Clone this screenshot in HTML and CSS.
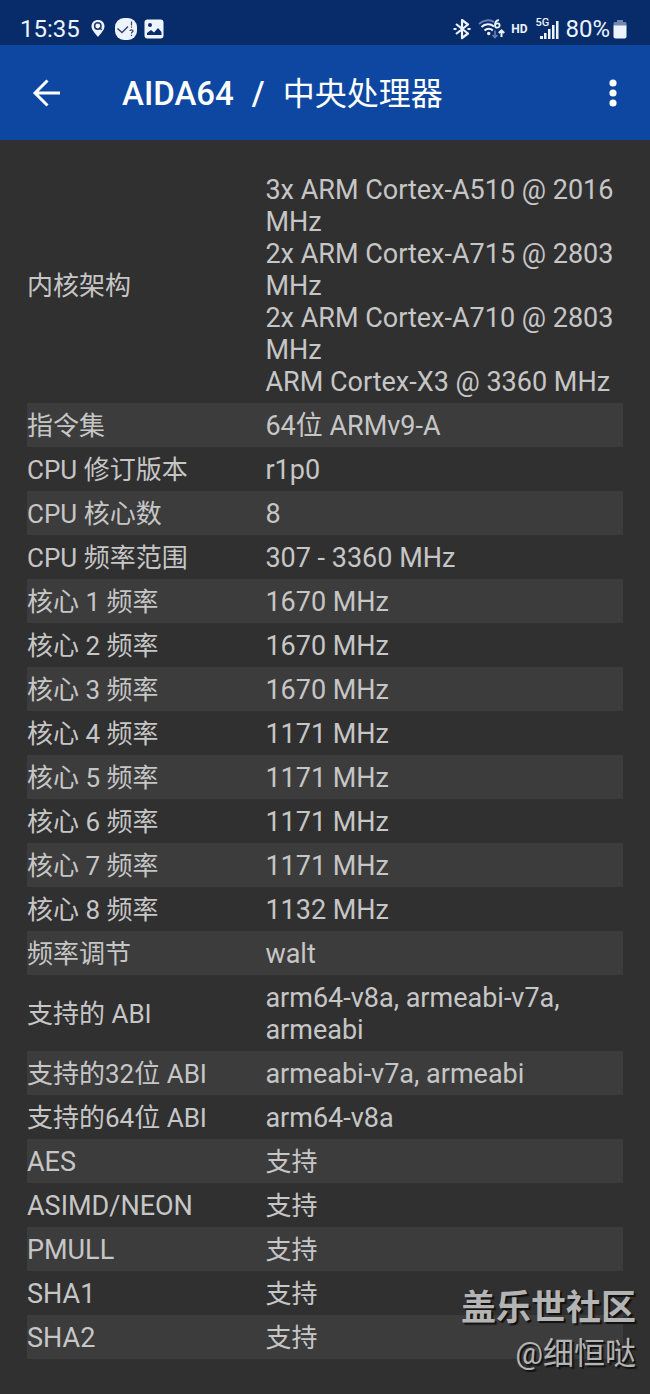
FILE: index.html
```html
<!DOCTYPE html>
<html lang="zh-CN">
<head>
  <meta charset="UTF-8">
  <meta name="viewport" content="width=device-width, initial-scale=1.0">
  <title>AIDA64 / 中央处理器</title>
  <link rel="stylesheet" href="styles.css">
</head>
<body>

  <div class="status-bar">
    <div class="status-left">
      <span class="clock">15:35</span>
      <svg class="pin" width="14" height="20" viewBox="0 0 14 20">
        <path d="M7 1C3.200 1 .5 3.600 .5 7.200c0 4 4 7.300 6.500 10.800 2.500-3.500 6.500-6.800 6.500-10.800C13.500 3.600 10.800 1 7 1z" fill="#eef4ff"/>
        <circle cx="6.800" cy="7" r="3.200" fill="none" stroke="#17366f" stroke-width="1.500"/>
        <path d="M8.500 8.500l2.200 2.200" stroke="#17366f" stroke-width="1.500"/>
      </svg>
      <svg class="check" width="24" height="24" viewBox="0 0 24 24">
        <rect x="1" y="1" width="22" height="22" rx="9" fill="#eef4ff"/>
        <path d="M3.500 11.500l4.500 4 6-6" fill="none" stroke="#34415c" stroke-width="1.400"/>
        <path d="M17.500 4.500v4M17.500 9.500v1.300M16 14c0-1.500 3-1.500 3 0 0 1.200-1.500 1-1.500 2.500M17.500 17.700V19" fill="none" stroke="#34415c" stroke-width="1.200"/>
      </svg>
      <svg width="20" height="20" viewBox="0 0 20 20">
        <rect x="0.500" y="0.500" width="19" height="19" rx="3" fill="#eef4ff"/>
        <circle cx="6" cy="6" r="2" fill="#0a2c6b"/>
        <path d="M3 16v-2l4-3 3 2.500 4-4.500 3.500 4V16z" fill="#0a2c6b"/>
      </svg>
    </div>
    <div class="status-right">
      <svg class="bluetooth" width="20" height="22" viewBox="0 0 20 22" fill="none" stroke="#eef4ff" stroke-width="2.200" stroke-linejoin="round">
        <path d="M4 6l12 9.500-6 4.500V2l6 4.500L4 16"/>
        <path d="M1.500 11h3M15.500 11h3"/>
      </svg>
      <svg class="wifi" width="28" height="22" viewBox="0 0 28 22" fill="none">
        <path d="M1 6C5 2.200 12 1 16 4" stroke="#6680b0" stroke-width="2"/>
        <path d="M3.500 9c3.500-3.500 9-3.500 12.500-.5M6.500 12.500c2.400-2.400 6-2.400 8.300 0" stroke="#eef4ff" stroke-width="2"/>
        <circle cx="10.700" cy="15.500" r="1.700" fill="#eef4ff"/>
        <path d="M17 12.500v7M14.500 17l2.500 2.500 2.500-2.500" stroke="#6680b0" stroke-width="1.600"/>
        <path d="M23.500 19v-6.500M20.800 15l2.700-2.700 2.700 2.700" stroke="#eef4ff" stroke-width="2"/>
        <path d="M20.800 2C18 2.500 17 5 17 7.200c0 3.300 4.600 3.300 4.600.3 0-2.700-3.700-2.800-4.500-.2" stroke="#eef4ff" stroke-width="1.800"/>
      </svg>
      <span class="hd">HD</span>
      <div class="signal">
        <svg width="24" height="22" viewBox="0 0 24 22" fill="#eef4ff">
          <path d="M5 18h3v3H5zM9 15h2.500v6H9zM13 11h2.500v10H13zM17 7h2.500v14H17zM21 3h2.500v18H21z"/>
        </svg>
        <span class="network">5G</span>
      </div>
      <span class="battery-level">80%</span>
      <svg class="battery" width="14" height="20" viewBox="0 0 14 20">
        <path d="M4 1h6v2h2q1.500 0 1.500 1.500V7H.5V4.500Q.5 3 2 3h2z" fill="#7388b0"/>
        <path d="M.5 6.500h13v11q0 2-2 2h-9q-2 0-2-2z" fill="#eef4ff"/>
      </svg>
    </div>
  </div>

  <header class="app-bar">
    <button class="back" aria-label="返回">
      <svg width="32" height="32" viewBox="0 0 32 32" fill="none" stroke="#fff" stroke-width="3">
        <path d="M30 16H5M17.500 3.500L5 16l12.500 12.500"/>
      </svg>
    </button>
    <h1><b>AIDA64</b><b>/</b><span>中央处理器</span></h1>
    <button class="more" aria-label="更多">
      <svg width="8" height="28" viewBox="0 0 8 28" fill="#fff">
        <circle cx="4" cy="4" r="3.600"/>
        <circle cx="4" cy="14" r="3.600"/>
        <circle cx="4" cy="24" r="3.600"/>
      </svg>
    </button>
  </header>

  <main>
    <table>
      <tbody>
        <tr><th scope="row">内核架构</th><td>3x ARM Cortex-A510 @ 2016 MHz<br>2x ARM Cortex-A715 @ 2803 MHz<br>2x ARM Cortex-A710 @ 2803 MHz<br>ARM Cortex-X3 @ 3360 MHz</td></tr>
        <tr><th scope="row">指令集</th><td>64位 ARMv9-A</td></tr>
        <tr><th scope="row">CPU 修订版本</th><td>r1p0</td></tr>
        <tr><th scope="row">CPU 核心数</th><td>8</td></tr>
        <tr><th scope="row">CPU 频率范围</th><td>307 - 3360 MHz</td></tr>
        <tr><th scope="row">核心 1 频率</th><td>1670 MHz</td></tr>
        <tr><th scope="row">核心 2 频率</th><td>1670 MHz</td></tr>
        <tr><th scope="row">核心 3 频率</th><td>1670 MHz</td></tr>
        <tr><th scope="row">核心 4 频率</th><td>1171 MHz</td></tr>
        <tr><th scope="row">核心 5 频率</th><td>1171 MHz</td></tr>
        <tr><th scope="row">核心 6 频率</th><td>1171 MHz</td></tr>
        <tr><th scope="row">核心 7 频率</th><td>1171 MHz</td></tr>
        <tr><th scope="row">核心 8 频率</th><td>1132 MHz</td></tr>
        <tr><th scope="row">频率调节</th><td>walt</td></tr>
        <tr><th scope="row">支持的 ABI</th><td>arm64-v8a, armeabi-v7a, armeabi</td></tr>
        <tr><th scope="row">支持的32位 ABI</th><td>armeabi-v7a, armeabi</td></tr>
        <tr><th scope="row">支持的64位 ABI</th><td>arm64-v8a</td></tr>
        <tr class="feature"><th scope="row">AES</th><td>支持</td></tr>
        <tr class="feature"><th scope="row">ASIMD/NEON</th><td>支持</td></tr>
        <tr class="feature"><th scope="row">PMULL</th><td>支持</td></tr>
        <tr class="feature"><th scope="row">SHA1</th><td>支持</td></tr>
        <tr class="feature"><th scope="row">SHA2</th><td>支持</td></tr>
      </tbody>
    </table>

    <div class="watermark">
      <strong>盖乐世社区</strong>
      <span>@细恒哒</span>
    </div>
  </main>

</body>
</html>
```
FILE: styles.css
```css
* {
  box-sizing: border-box;
}

body {
  margin: 0;
  background: #303030;
  color: #c6c6c6;
  font-family: Roboto, "Noto Sans CJK SC", sans-serif;
  font-size: 26px;
  line-height: 32px;
}

svg {
  display: block;
  flex: none;
}

/* Status bar */
.status-bar {
  display: flex;
  justify-content: space-between;
  height: 45px;
  padding: 13px 23px 0 20px;
  background: #082c6a;
  color: #eef4ff;
}

.status-left,
.status-right {
  display: flex;
  align-items: center;
  height: 32px;
}

.clock,
.battery-level {
  font-size: 24px;
}

.pin {
  margin: 0 9px 0 11px;
}

.check {
  margin-right: 6px;
}

.wifi {
  margin: 0 5px 0 6px;
}

.hd {
  font-size: 12px;
  font-weight: 700;
}

.signal {
  position: relative;
  margin: 0 6px 0 8px;
}

.network {
  position: absolute;
  top: 0;
  left: 0;
  font-size: 11px;
  line-height: 10px;
  font-weight: 500;
}

.battery {
  margin-left: 3px;
}

/* App bar */
.app-bar {
  display: flex;
  align-items: center;
  height: 95px;
  padding: 0 33px 0 30px;
  background: #0d47a1;
  color: #fff;
}

button {
  padding: 0;
  border: 0;
  background: none;
  cursor: pointer;
}

h1 {
  display: flex;
  flex: 1;
  gap: 18px;
  margin: 2px 0 0 60px;
  font-size: 32px;
  line-height: 40px;
  font-weight: 400;
}

h1 b {
  font-size: 33px;
  font-weight: 500;
}

/* CPU details */
main {
  position: relative;
  padding: 27px 27px 36px;
}

table {
  width: 100%;
  border-collapse: collapse;
  table-layout: fixed;
}

tr:nth-child(even) {
  background: #3c3c3c;
}

th,
td {
  padding: 7px 0 5px;
  font-weight: 400;
  text-align: left;
  vertical-align: middle;
}

th {
  width: 40%;
}

td,
.feature th {
  font-size: 27px;
}

.feature td {
  font-size: 26px;
}

.watermark {
  position: absolute;
  right: 14px;
  bottom: 19px;
  display: flex;
  flex-direction: column;
  align-items: flex-end;
  color: #b4b4b4;
  text-shadow: 2px 2px 1px #111;
}

.watermark strong {
  font-size: 35px;
  line-height: 46px;
}

.watermark span {
  font-size: 31px;
  line-height: 44px;
}
```
